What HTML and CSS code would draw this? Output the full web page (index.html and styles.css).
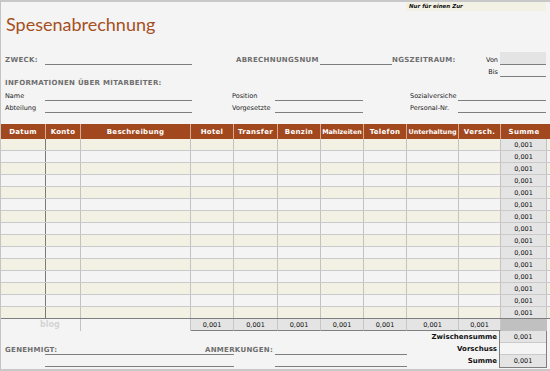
FILE: index.html
```html
<!DOCTYPE html>
<html lang="de">
<head>
<meta charset="utf-8">
<title>Spesenabrechnung</title>
<link rel="stylesheet" href="styles.css">
</head>
<body>
<div class="sheet">
  <header class="top">
    <h1 class="title">Spesenabrechnung</h1>
    <div class="note">Nur für einen Zur</div>
  </header>

  <div class="row-purpose">
    <span class="lbl cap c2">ZWECK:</span>
    <span class="line c3"></span>
    <span class="lbl cap c5">ABRECHNUNGSNUM</span>
    <span class="line c6"></span>
    <span class="lbl cap c7">NGSZEITRAUM:</span>
    <span class="lbl end c8">Von</span>
    <span class="line field c9"></span>
  </div>
  <div class="row-purpose short">
    <span class="lbl end c8">Bis</span>
    <span class="line c9"></span>
  </div>

  <div class="row-heading">
    <span class="lbl cap">INFORMATIONEN ÜBER MITARBEITER:</span>
  </div>

  <div class="row-person">
    <span class="lbl c2">Name</span>
    <span class="line c3"></span>
    <span class="lbl c5">Position</span>
    <span class="line c6"></span>
    <span class="lbl c8">Sozialversiche</span>
    <span class="line c9"></span>
  </div>
  <div class="row-person">
    <span class="lbl c2">Abteilung</span>
    <span class="line c3"></span>
    <span class="lbl c5">Vorgesetzte</span>
    <span class="line c6"></span>
    <span class="lbl c8">Personal-Nr.</span>
    <span class="line c9"></span>
  </div>

  <div class="table">
    <div class="thead">
      <span class="th">Datum</span>
      <span class="th">Konto</span>
      <span class="th">Beschreibung</span>
      <span class="th">Hotel</span>
      <span class="th">Transfer</span>
      <span class="th">Benzin</span>
      <span class="th tight">Mahlzeiten</span>
      <span class="th">Telefon</span>
      <span class="th tight">Unterhaltung</span>
      <span class="th">Versch.</span>
      <span class="th">Summe</span>
    </div>

    <div class="tr"><span class="td first"></span><span class="td"></span><span class="td"></span><span class="td"></span><span class="td"></span><span class="td"></span><span class="td"></span><span class="td"></span><span class="td"></span><span class="td"></span><span class="td sum">0,001</span></div>
    <div class="tr"><span class="td first"></span><span class="td"></span><span class="td"></span><span class="td"></span><span class="td"></span><span class="td"></span><span class="td"></span><span class="td"></span><span class="td"></span><span class="td"></span><span class="td sum">0,001</span></div>
    <div class="tr"><span class="td first"></span><span class="td"></span><span class="td"></span><span class="td"></span><span class="td"></span><span class="td"></span><span class="td"></span><span class="td"></span><span class="td"></span><span class="td"></span><span class="td sum">0,001</span></div>
    <div class="tr"><span class="td first"></span><span class="td"></span><span class="td"></span><span class="td"></span><span class="td"></span><span class="td"></span><span class="td"></span><span class="td"></span><span class="td"></span><span class="td"></span><span class="td sum">0,001</span></div>
    <div class="tr"><span class="td first"></span><span class="td"></span><span class="td"></span><span class="td"></span><span class="td"></span><span class="td"></span><span class="td"></span><span class="td"></span><span class="td"></span><span class="td"></span><span class="td sum">0,001</span></div>
    <div class="tr"><span class="td first"></span><span class="td"></span><span class="td"></span><span class="td"></span><span class="td"></span><span class="td"></span><span class="td"></span><span class="td"></span><span class="td"></span><span class="td"></span><span class="td sum">0,001</span></div>
    <div class="tr"><span class="td first"></span><span class="td"></span><span class="td"></span><span class="td"></span><span class="td"></span><span class="td"></span><span class="td"></span><span class="td"></span><span class="td"></span><span class="td"></span><span class="td sum">0,001</span></div>
    <div class="tr"><span class="td first"></span><span class="td"></span><span class="td"></span><span class="td"></span><span class="td"></span><span class="td"></span><span class="td"></span><span class="td"></span><span class="td"></span><span class="td"></span><span class="td sum">0,001</span></div>
    <div class="tr"><span class="td first"></span><span class="td"></span><span class="td"></span><span class="td"></span><span class="td"></span><span class="td"></span><span class="td"></span><span class="td"></span><span class="td"></span><span class="td"></span><span class="td sum">0,001</span></div>
    <div class="tr"><span class="td first"></span><span class="td"></span><span class="td"></span><span class="td"></span><span class="td"></span><span class="td"></span><span class="td"></span><span class="td"></span><span class="td"></span><span class="td"></span><span class="td sum">0,001</span></div>
    <div class="tr"><span class="td first"></span><span class="td"></span><span class="td"></span><span class="td"></span><span class="td"></span><span class="td"></span><span class="td"></span><span class="td"></span><span class="td"></span><span class="td"></span><span class="td sum">0,001</span></div>
    <div class="tr"><span class="td first"></span><span class="td"></span><span class="td"></span><span class="td"></span><span class="td"></span><span class="td"></span><span class="td"></span><span class="td"></span><span class="td"></span><span class="td"></span><span class="td sum">0,001</span></div>
    <div class="tr"><span class="td first"></span><span class="td"></span><span class="td"></span><span class="td"></span><span class="td"></span><span class="td"></span><span class="td"></span><span class="td"></span><span class="td"></span><span class="td"></span><span class="td sum">0,001</span></div>
    <div class="tr"><span class="td first"></span><span class="td"></span><span class="td"></span><span class="td"></span><span class="td"></span><span class="td"></span><span class="td"></span><span class="td"></span><span class="td"></span><span class="td"></span><span class="td sum">0,001</span></div>
    <div class="tr last"><span class="td first"></span><span class="td"></span><span class="td"></span><span class="td"></span><span class="td"></span><span class="td"></span><span class="td"></span><span class="td"></span><span class="td"></span><span class="td"></span><span class="td sum">0,001</span></div>

    <div class="tot">
      <span class="blog">blog</span>
      <span class="tot-gap"></span>
      <span class="tt">0,001</span>
      <span class="tt">0,001</span>
      <span class="tt">0,001</span>
      <span class="tt">0,001</span>
      <span class="tt">0,001</span>
      <span class="tt">0,001</span>
      <span class="tt">0,001</span>
      <span class="tt-sum"></span>
    </div>
  </div>

  <div class="foot">
    <div class="foot-left">
      <span class="rlbl r1">Zwischensumme</span>
      <span class="lbl cap g-lbl">GENEHMIGT:</span>
      <span class="line g-line2"></span>
      <span class="lbl cap end a-lbl">ANMERKUNGEN:</span>
      <span class="line a-line2"></span>
      <span class="rlbl r2">Vorschuss</span>
      <span class="line g-line3"></span>
      <span class="line a-line3"></span>
      <span class="rlbl r3">Summe</span>
    </div>
    <div class="box">
      <span class="bc grey">0,001</span>
      <span class="bc"></span>
      <span class="bc grey last">0,001</span>
    </div>
  </div>
</div>
</body>
</html>
```

FILE: styles.css
```css
* { box-sizing: border-box; }

html, body {
  margin: 0;
  padding: 0;
  background: #f4f4f4;
}

.sheet {
  --cols: 45px 35px 110px 43px 44px 43px 43px 43px 52px 42px 46px;
  width: 550px;
  height: 371px;
  background: #f4f4f4;
  border-left: 1px solid #c4c4c4;
  border-top: 2px solid #c8c8c8;
  border-bottom: 2px solid #c8c8c8;
  font-family: "DejaVu Sans", sans-serif;
  color: #222;
  overflow: hidden;
}

/* ---------- top ---------- */
.top {
  height: 50px;
  display: flex;
  justify-content: space-between;
  align-items: flex-start;
}

.title {
  margin: 0;
  padding: 13px 0 0 5px;
  font-family: "Lato", sans-serif;
  font-weight: 400;
  font-size: 18px;
  line-height: 18px;
  color: #a54f22;
}

.note {
  width: 140px;
  height: 9px;
  margin-right: 4px;
  background: #f2f1e3;
  padding-left: 3px;
  font-size: 5.5px;
  line-height: 9px;
  font-style: italic;
  font-weight: bold;
  color: #111;
}

/* ---------- form rows ---------- */
.row-purpose {
  display: grid;
  grid-template-columns: 4px 40px 147px 44px 84px 72px 66px 42px 46px;
  height: 13px;
}
.row-purpose.short { height: 12px; }

.row-person {
  display: grid;
  grid-template-columns: 4px 40px 147px 40px 43px 88px 47px 48px 88px;
  height: 12px;
}

.row-heading {
  height: 12px;
  padding-left: 4px;
  display: flex;
  align-items: center;
}

.c2 { grid-column: 2; }
.c3 { grid-column: 3; }
.c5 { grid-column: 5; }
.c6 { grid-column: 6; }
.c7 { grid-column: 7; }
.c8 { grid-column: 8; }
.c9 { grid-column: 9; }

.lbl {
  display: flex;
  align-items: flex-end;
  white-space: nowrap;
  font-size: 6.5px;
  line-height: 8px;
  padding-bottom: 1px;
  color: #222;
}
.lbl.cap {
  font-size: 7px;
  font-weight: bold;
  letter-spacing: 0.3px;
  color: #6e6e6e;
}
.row-heading .lbl { padding-bottom: 0; }
.lbl.end { justify-content: flex-end; padding-right: 2px; }

.line { border-bottom: 1px solid #7e7e7e; }
.line.field { background: #e4e4e4; }

/* ---------- table ---------- */
.table { margin-top: 11px; }

.thead,
.tr,
.tot {
  display: grid;
  grid-template-columns: var(--cols);
}

.thead {
  height: 15px;
  background: #a2481f;
}
.th {
  display: flex;
  justify-content: center;
  align-items: center;
  white-space: nowrap;
  border-right: 1px solid #d9a98d;
  color: #fff;
  font-size: 7px;
  font-weight: bold;
  letter-spacing: 0.3px;
}
.th.tight {
  font-size: 6.4px;
  letter-spacing: 0;
}
.th:last-child { border-right: 0; }

.tr {
  height: 12px;
  border-bottom: 1px solid #cacaca;
  background: #f4f4f4;
}
.tr:nth-child(even) { background: #f3f1e3; }
.tr.last { border-bottom-color: #7e7e7e; }

.td {
  border-right: 1px solid #c2c2c2;
}
.td.first { border-right-color: #7a7a7a; }
.td.sum {
  background: #e4e4e4;
  display: flex;
  justify-content: center;
  align-items: center;
  font-size: 6.5px;
  color: #111;
}

.tot { height: 12px; }
.blog {
  grid-column: 1 / 3;
  border-right: 1px solid #c2c2c2;
  padding-left: 39px;
  font-size: 8px;
  font-weight: bold;
  line-height: 11px;
  color: #d4d4d4;
}
.tt {
  background: #e4e4e4;
  border-right: 1px solid #c6c6c6;
  border-bottom: 1px solid #7e7e7e;
  display: flex;
  justify-content: center;
  align-items: center;
  font-size: 6.5px;
  color: #111;
}
.tot-gap { border-right: 1px solid #c6c6c6; }
.tt-sum { background: #c0c0c0; }

/* ---------- foot ---------- */
.foot {
  display: flex;
  height: 38px;
}
.foot-left {
  width: 498px;
  display: grid;
  grid-template-columns: 4px 40px 189px 41px 132px 1fr;
  grid-template-rows: 12px 12px 12px;
}
.rlbl {
  grid-column: 6;
  display: flex;
  justify-content: flex-end;
  align-items: center;
  padding-right: 2px;
  font-size: 7px;
  font-weight: bold;
  color: #111;
  white-space: nowrap;
}
.r1 { grid-row: 1; }
.r2 { grid-row: 2; }
.r3 { grid-row: 3; }
.g-lbl { grid-column: 2; grid-row: 2; padding-bottom: 1px; }
.g-line2 { grid-column: 3; grid-row: 2; }
.a-lbl { grid-column: 4; grid-row: 2; padding-right: 1px; }
.a-line2 { grid-column: 5; grid-row: 2; }
.g-line3 { grid-column: 3; grid-row: 3; }
.a-line3 { grid-column: 5; grid-row: 3; }

.box {
  width: 48px;
  height: 37px;
  border-left: 1px solid #808080;
  border-right: 1px solid #808080;
  border-bottom: 1px solid #808080;
  display: flex;
  flex-direction: column;
}
.bc {
  height: 12px;
  border-bottom: 1px solid #cacaca;
  display: flex;
  justify-content: center;
  align-items: center;
  font-size: 6.5px;
  color: #111;
}
.bc.grey { background: #e4e4e4; }
.bc.last { border-bottom: 0; }
```
